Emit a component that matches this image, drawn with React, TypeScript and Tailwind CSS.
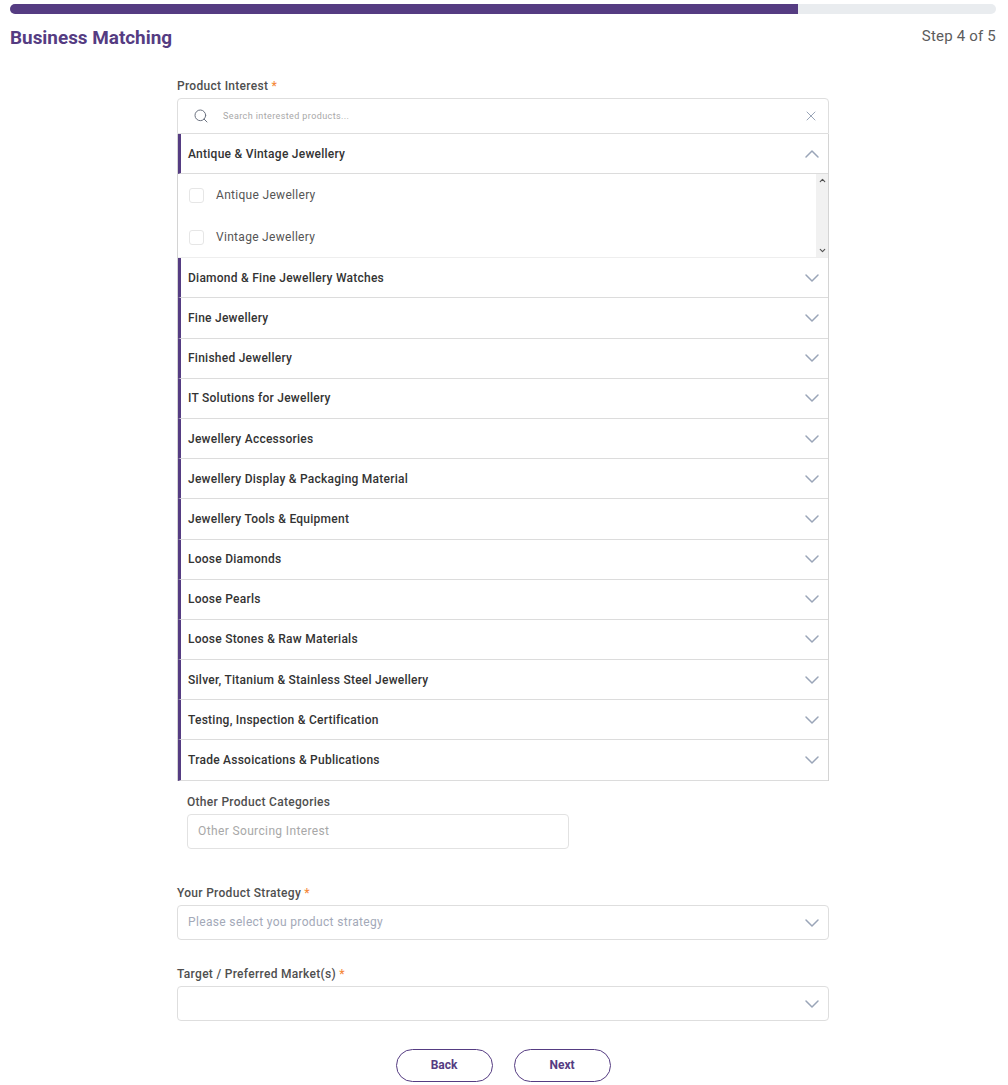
import { ChevronDown, ChevronUp, Search, X } from "lucide-react";

const categories = [
  "Diamond & Fine Jewellery Watches",
  "Fine Jewellery",
  "Finished Jewellery",
  "IT Solutions for Jewellery",
  "Jewellery Accessories",
  "Jewellery Display & Packaging Material",
  "Jewellery Tools & Equipment",
  "Loose Diamonds",
  "Loose Pearls",
  "Loose Stones & Raw Materials",
  "Silver, Titanium & Stainless Steel Jewellery",
  "Testing, Inspection & Certification",
  "Trade Assoications & Publications",
];

function Required() {
  return <span className="text-[#f58a3c]"> *</span>;
}

function Label({ children }: { children: React.ReactNode }) {
  return <div className="text-[12px] leading-[14px] font-medium tracking-[0.3px] text-[#4f4f4f]">{children}</div>;
}

function Row({ title, open }: { title: string; open?: boolean }) {
  const Icon = open ? ChevronUp : ChevronDown;
  return (
    <div className="flex h-[40.2px] items-center justify-between border-b border-[#dcdcdc] border-l-[3px] border-l-[#553c82] pr-[4px] pl-[7px]">
      <span className="text-[12px] font-medium tracking-[0.25px] text-[#333333]">{title}</span>
      <Icon className="h-[24px] w-[24px] text-[#9aa5b8]" strokeWidth={1.5} />
    </div>
  );
}

function Option({ label }: { label: string }) {
  return (
    <div className="flex h-[42px] items-center pl-[11px]">
      <span className="h-[15px] w-[15px] rounded-[3px] border border-[#e6e6e6] bg-white" />
      <span className="ml-[12px] text-[12px] tracking-[0.3px] text-[#555555]">{label}</span>
    </div>
  );
}

function Select({ placeholder }: { placeholder?: string }) {
  return (
    <div className="mt-[5px] flex h-[35px] items-center justify-between rounded-[4px] border border-[#dedede] pr-[4px] pl-[10px]">
      <span className="text-[12px] tracking-[0.35px] text-[#a3a9b8]">{placeholder}</span>
      <ChevronDown className="mt-[2px] h-[24px] w-[24px] text-[#9aa5b8]" strokeWidth={1.5} />
    </div>
  );
}

export default function App() {
  return (
    <div className="min-h-[1085px] bg-white font-['Roboto',sans-serif]">
      <div className="px-[10px] pt-[4px] pr-[12px]">
        <div className="h-[10px] overflow-hidden rounded-full bg-[#e9ecef]">
          <div className="h-full w-[79.9%] bg-[#553c82]" />
        </div>
        <div className="flex items-start justify-between pt-[12px]">
          <h1 className="text-[18.9px] leading-[24px] font-bold text-[#553c82]">Business Matching</h1>
          <span className="text-[15px] leading-[20px] tracking-[0.2px] text-[#5c5c5c]">Step 4 of 5</span>
        </div>
      </div>

      <div className="mx-[177px] mt-[29px] w-[652px]">
        <Label>
          Product Interest
          <Required />
        </Label>

        <div className="mt-[5px] flex h-[36px] items-center justify-between rounded-t-[4px] border border-[#dedede] pr-[9px] pl-[15px]">
          <div className="flex items-center">
            <Search className="h-[16px] w-[16px] text-[#6b7280]" strokeWidth={1.5} />
            <span className="mt-[1px] ml-[14px] text-[9px] tracking-[0.4px] text-[#a8a8a8]">Search interested products...</span>
          </div>
          <X className="h-[16px] w-[16px] text-[#9aa5b8]" strokeWidth={1.5} />
        </div>

        <div className="border-x border-[#d4d4d4]">
          <Row title="Antique & Vintage Jewellery" open />
          <div className="flex h-[84px] border-b border-[#eeeeee]">
            <div className="flex-1">
              <Option label="Antique Jewellery" />
              <Option label="Vintage Jewellery" />
            </div>
            <div className="flex w-[12px] flex-col items-center justify-between bg-[#f1f1f1] py-[2px]">
              <ChevronUp className="h-[9px] w-[9px] text-[#505050]" strokeWidth={3} />
              <ChevronDown className="h-[9px] w-[9px] text-[#505050]" strokeWidth={3} />
            </div>
          </div>
          {categories.map((c) => (
            <Row key={c} title={c} />
          ))}
        </div>

        <div className="mt-[14px] ml-[10px] w-[382px]">
          <Label>Other Product Categories</Label>
          <div className="mt-[5px] flex h-[35px] items-center rounded-[4px] border border-[#e2e2e2] pl-[10px]">
            <span className="text-[12px] tracking-[0.37px] text-[#a8a8a8]">Other Sourcing Interest</span>
          </div>
        </div>

        <div className="mt-[37px]">
          <Label>
            Your Product Strategy
            <Required />
          </Label>
          <Select placeholder="Please select you product strategy" />
        </div>

        <div className="mt-[27px]">
          <Label>
            Target / Preferred Market(s)
            <Required />
          </Label>
          <Select />
        </div>

        <div className="mt-[28px] flex justify-center gap-[21px]">
          <button className="h-[33px] w-[97px] rounded-full border-[1.5px] border-[#553c82] text-[12px] font-bold text-[#553c82]">Back</button>
          <button className="h-[33px] w-[97px] rounded-full border-[1.5px] border-[#553c82] text-[12px] font-bold text-[#553c82]">Next</button>
        </div>
      </div>
    </div>
  );
}
